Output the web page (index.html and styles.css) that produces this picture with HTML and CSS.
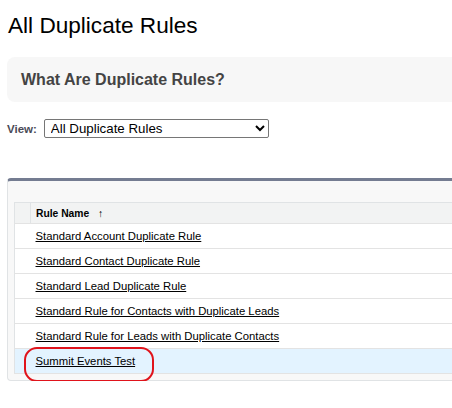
FILE: index.html
```html
<!DOCTYPE html>
<html>
<head>
<meta charset="utf-8">
<link rel="stylesheet" href="styles.css">
</head>
<body>
<div class="page">
  <h1 class="title">All Duplicate Rules</h1>
  <div class="info-panel">
    <h2 class="info-title">What Are Duplicate Rules?</h2>
  </div>
  <div class="view-bar">
    <label class="view-label">View:</label>
    <select class="view-select">
      <option>All Duplicate Rules</option>
    </select>
  </div>
  <div class="list-box">
    <div class="list-top"></div>
    <table class="list">
      <thead>
        <tr class="head-row">
          <th class="col-action"></th>
          <th class="col-name">Rule Name <span class="sort">↑</span></th>
        </tr>
      </thead>
      <tbody>
        <tr><td class="col-action"></td><td class="col-name"><a href="#">Standard Account Duplicate Rule</a></td></tr>
        <tr><td class="col-action"></td><td class="col-name"><a href="#">Standard Contact Duplicate Rule</a></td></tr>
        <tr><td class="col-action"></td><td class="col-name"><a href="#">Standard Lead Duplicate Rule</a></td></tr>
        <tr><td class="col-action"></td><td class="col-name"><a href="#">Standard Rule for Contacts with Duplicate Leads</a></td></tr>
        <tr><td class="col-action"></td><td class="col-name"><a href="#">Standard Rule for Leads with Duplicate Contacts</a></td></tr>
        <tr class="selected"><td class="col-action"></td><td class="col-name"><span class="mark-wrap"><a href="#">Summit Events Test</a><span class="mark"></span></span></td></tr>
      </tbody>
    </table>
  </div>
</div>
</body>
</html>
```
FILE: styles.css
```css
html, body {
  margin: 0;
  padding: 0;
  background: #ffffff;
}
body {
  font-family: "Liberation Sans", Arial, sans-serif;
  color: #000;
  overflow: hidden;
}
.page {
  padding: 12px 0 0 8px;
}
.title {
  margin: 0;
  font-size: 22.6px;
  font-weight: normal;
  line-height: 28px;
  color: #000;
}
.info-panel {
  margin: 17px 0 0 -1px;
  background: #f7f7f7;
  border-radius: 8px 0 0 8px;
  height: 45px;
  display: flex;
  align-items: center;
  padding-left: 14px;
}
.info-title {
  margin: 0;
  font-size: 16px;
  font-weight: bold;
  color: #444444;
}
.view-bar {
  display: flex;
  align-items: center;
  margin: 17px 0 0 -1px;
  gap: 7px;
}
.view-label {
  font-size: 11.5px;
  font-weight: bold;
  color: #4a4a56;
}
.view-select {
  width: 225px;
  height: 19px;
  font-family: "Liberation Sans", Arial, sans-serif;
  font-size: 13.3px;
  border: 1px solid #767676;
  border-radius: 2px;
  padding: 0 2px;
  background: #fff;
  color: #000;
}
.list-box {
  margin: 40px 0 0 -1px;
  border-top: 3px solid #747c91;
  border-left: 1px solid #e0e3e5;
  border-bottom: 1px solid #e0e3e5;
  border-radius: 4px 0 0 4px;
  background: #f8f8f8;
  padding: 0 0 6px 6px;
}
.list-top {
  height: 21px;
}
.list {
  width: 100%;
  border-collapse: collapse;
  background: #fff;
  border-left: 1px solid #e0e3e5;
}
.list th, .list td {
  border-bottom: 1px solid #e3e3e3;
  padding: 0;
}
.head-row th {
  background: #f2f3f3;
  border-top: 1px solid #e0e3e5;
  height: 20px;
  text-align: left;
  font-size: 10.3px;
  font-weight: bold;
  color: #000;
}
.head-row .col-action {
  border-right: 1px solid #e0e3e5;
}
.col-action {
  width: 15px;
}
.col-name {
  padding-left: 5px !important;
}
.sort {
  font-weight: normal;
  margin-left: 6px;
}
.list td {
  height: 24px;
  font-size: 11.3px;
}
.list a {
  color: #000;
  text-decoration: underline;
}
.selected td {
  background: #e3f3ff;
}
.mark-wrap {
  position: relative;
  display: inline-block;
}
.mark {
  position: absolute;
  left: -12px;
  top: -8px;
  width: 126px;
  height: 31px;
  border: 2.5px solid #e0131b;
  border-radius: 13px;
}
```
